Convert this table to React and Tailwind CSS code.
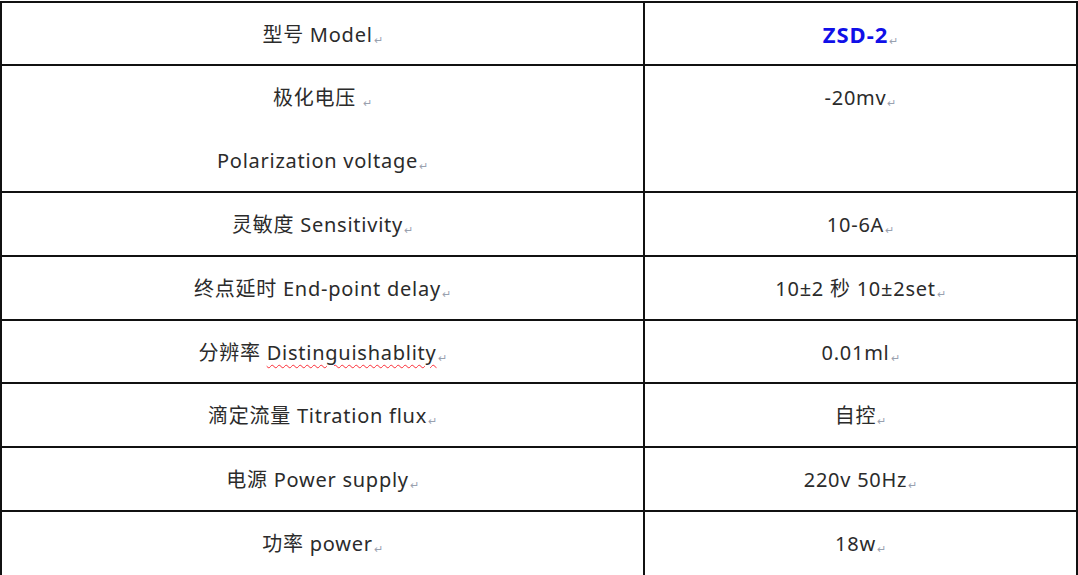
const rows = [
  { left: ["型号 Model"], right: ["ZSD-2"], h: "h-[63px]", bold: true },
  { left: ["极化电压 ", "Polarization voltage"], right: ["-20mv"], h: "h-[127px]" },
  { left: ["灵敏度 Sensitivity"], right: ["10-6A"], h: "h-[64px]" },
  { left: ["终点延时 End-point delay"], right: ["10±2 秒 10±2set"], h: "h-[64px]" },
  { left: ["分辨率 ", "Distinguishablity"], right: ["0.01ml"], h: "h-[63px]", wavy: true },
  { left: ["滴定流量 Titration flux"], right: ["自控"], h: "h-[64px]" },
  { left: ["电源 Power supply"], right: ["220v 50Hz"], h: "h-[64px]" },
  { left: ["功率 power"], right: ["18w"], h: "h-[70px]" },
];

function Mark() {
  return (
    <span className="text-[11px] leading-none tracking-normal text-gray-400 align-[-2px] ml-px">
      ↵
    </span>
  );
}

export default function App() {
  return (
    <div
      className="w-[1078px] h-[575px] overflow-hidden bg-white pt-px text-[20px] tracking-[0.75px] text-[#2b2b2b]"
      style={{ fontFamily: '"Noto Sans", "Noto Sans CJK SC", sans-serif' }}
    >
      <div className="w-[1078px] border-t-2 border-l-2 border-r-2 border-[#111]">
        {rows.map((r, i) => (
          <div key={i} className={"flex border-b-2 border-[#111] " + r.h}>
            <div className="w-[643px] border-r-2 border-[#111] flex flex-col items-center">
              {r.wavy ? (
                <div className="h-[63px] leading-[63px] whitespace-pre">
                  {r.left[0]}
                  <span className="underline decoration-wavy decoration-red-500 decoration-1 underline-offset-4">
                    {r.left[1]}
                  </span>
                  <Mark />
                </div>
              ) : (
                r.left.map((l, j) => (
                  <div key={j} className="h-[63px] leading-[63px] whitespace-pre">
                    {l}
                    <Mark />
                  </div>
                ))
              )}
            </div>
            <div className="flex-1 flex flex-col items-center">
              <div className="h-[63px] leading-[63px] whitespace-pre">
                {r.bold ? (
                  <span className="font-bold text-[22px] tracking-[1px] text-[#1010e8]">
                    {r.right[0]}
                  </span>
                ) : (
                  r.right[0]
                )}
                <Mark />
              </div>
            </div>
          </div>
        ))}
      </div>
    </div>
  );
}
